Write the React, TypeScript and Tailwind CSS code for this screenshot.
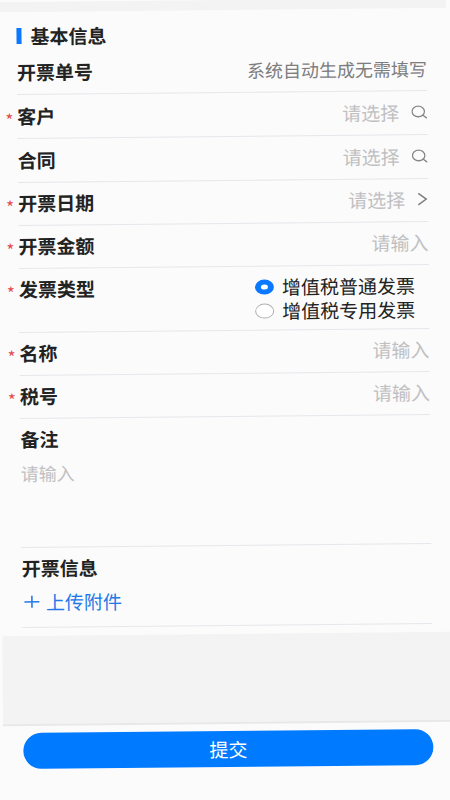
import { useState } from 'react';
import type { ReactNode } from 'react';

const INPUT_CLASS =
  'min-w-0 flex-1 bg-transparent text-right text-[19px] leading-6 text-[#333] outline-none placeholder:text-[#c0c0c2]';

function SearchIcon() {
  return (
    <svg className="h-[14px] w-4" viewBox="0 0 16 14" fill="none" stroke="#858587" strokeWidth={1.3} strokeLinecap="round">
      <ellipse cx="7" cy="6.3" rx="6.2" ry="5.3" />
      <path d="M11.3 10L15.2 12.8" />
    </svg>
  );
}

function ArrowIcon() {
  return (
    <svg className="h-[14px] w-[11px]" viewBox="0 0 11 14" fill="none" stroke="#7d7d7f" strokeWidth={1.4}>
      <path d="M1.2 1.2L9.2 7L1.2 12.8" />
    </svg>
  );
}

function Required() {
  return (
    <span className="absolute -left-3 top-1 text-[17px] leading-6 font-normal text-[#e5484d]" aria-hidden="true">
      *
    </span>
  );
}

type RowProps = {
  id: string;
  label: string;
  required?: boolean;
  search?: boolean;
  children: ReactNode;
};

function Row({ id, label, required, search, children }: RowProps) {
  return (
    <div className={`flex items-center border-b border-[#e6e6ec] pb-[2px] ${search ? 'h-[44px]' : 'h-[43px]'}`}>
      <label htmlFor={id} className="relative font-bold">
        {required && <Required />}
        {label}
      </label>
      {children}
    </div>
  );
}

const invoiceTypes = [
  { value: 'normal', label: '增值税普通发票' },
  { value: 'special', label: '增值税专用发票' },
];

export default function App() {
  const [invoiceType, setInvoiceType] = useState('normal');

  return (
    <div className="min-h-screen overflow-hidden bg-[#fbfbfb]">
      <form
        className="-rotate-[0.55deg] text-[19px] leading-6 text-[#222] [font-family:'Noto_Sans_CJK_SC',sans-serif]"
        onSubmit={(e) => e.preventDefault()}
      >
        <div className="h-[10px] bg-[#f3f3f3]" />

        <section className="px-5 pt-3">
          <h2 className="flex items-center gap-[9px] font-bold">
            <span className="h-4 w-[5px] bg-[#0a78ff]" />
            基本信息
          </h2>

          <div className="mt-1 flex h-[43px] items-center justify-between border-b border-[#e6e6ec] pb-[2px]">
            <span className="font-bold">开票单号</span>
            <span className="text-[18px] text-[#7d7d7f]">系统自动生成无需填写</span>
          </div>

          <Row id="customer" label="客户" required search>
            <input id="customer" className={INPUT_CLASS} placeholder="请选择" />
            <button type="button" className="ml-3" aria-label="搜索客户">
              <SearchIcon />
            </button>
          </Row>
          <Row id="contract" label="合同" search>
            <input id="contract" className={INPUT_CLASS} placeholder="请选择" />
            <button type="button" className="ml-3" aria-label="搜索合同">
              <SearchIcon />
            </button>
          </Row>
          <Row id="date" label="开票日期" required>
            <input id="date" className={INPUT_CLASS} placeholder="请选择" />
            <button type="button" className="ml-3" aria-label="选择日期">
              <ArrowIcon />
            </button>
          </Row>
          <Row id="amount" label="开票金额" required>
            <input id="amount" className={INPUT_CLASS} placeholder="请输入" />
          </Row>

          <fieldset className="border-b border-[#e6e6ec] pt-2 pb-[7px]">
            <legend className="relative float-left font-bold">
              <Required />
              发票类型
            </legend>
            <div className="flex flex-col items-end pr-[14px]">
              {invoiceTypes.map((type) => (
                <label key={type.value} className="flex items-center gap-2">
                  <input
                    type="radio"
                    name="invoiceType"
                    value={type.value}
                    checked={invoiceType === type.value}
                    onChange={() => setInvoiceType(type.value)}
                    className="h-[15px] w-[19px] appearance-none rounded-[50%] border border-[#b0b0b2] bg-white checked:border-x-[6px] checked:border-y-[5px] checked:border-[#0a78ff]"
                  />
                  {type.label}
                </label>
              ))}
            </div>
          </fieldset>

          <Row id="name" label="名称" required>
            <input id="name" className={INPUT_CLASS} placeholder="请输入" />
          </Row>
          <Row id="taxNo" label="税号" required>
            <input id="taxNo" className={INPUT_CLASS} placeholder="请输入" />
          </Row>

          <div className="border-b border-[#e6e6ec] pt-2">
            <label htmlFor="remark" className="block font-bold">
              备注
            </label>
            <textarea
              id="remark"
              placeholder="请输入"
              className="mt-[10px] block h-[86px] w-full resize-none bg-transparent text-[18px] leading-6 outline-none placeholder:text-[#c0c0c2]"
            />
          </div>

          <div className="border-b border-[#e6e6ec] pt-2 pb-[13px]">
            <h3 className="font-bold">开票信息</h3>
            <button type="button" className="mt-[10px] flex items-center gap-[6px] pl-[2px] text-[#2478e8]">
              <svg className="h-4 w-4" viewBox="0 0 16 16" fill="none" stroke="currentColor" strokeWidth={1.6}>
                <path d="M0.5 8H15.5M8 2V14" />
              </svg>
              上传附件
            </button>
          </div>
        </section>

        <div className="mt-2 h-[88px] bg-[#f3f3f3]" />

        <footer className="border-t-2 border-[#e8e8e8] px-5 pt-[7px] pb-8">
          <button type="submit" className="h-9 w-full rounded-full bg-[#007aff] text-white">
            提交
          </button>
        </footer>
      </form>
    </div>
  );
}
